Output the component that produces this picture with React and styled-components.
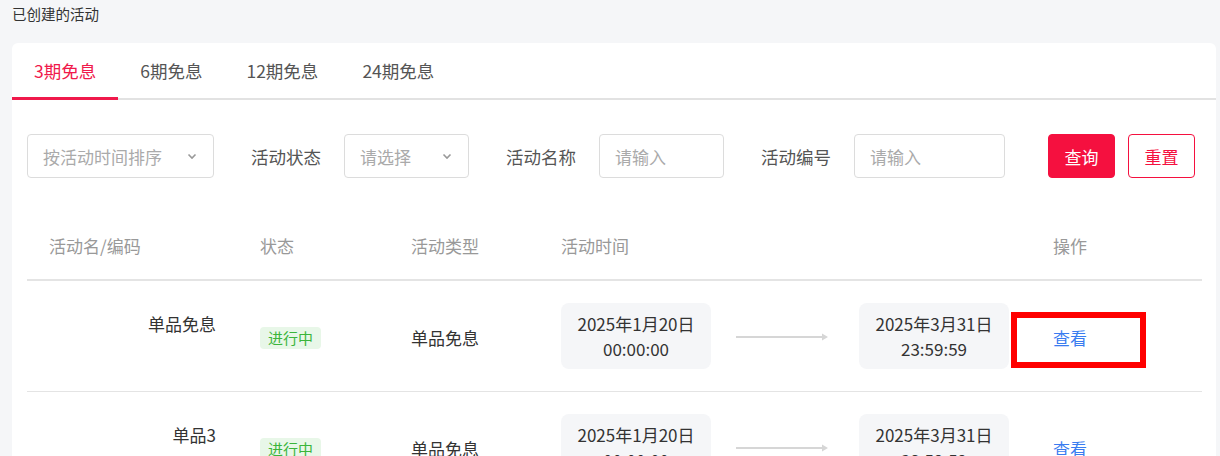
import React from "react";
import styled, { createGlobalStyle } from "styled-components";

const GlobalStyle = createGlobalStyle`
*{
  box-sizing: border-box;
  margin: 0;
  padding: 0;
}
body{
  background: #f5f6f8;
  font-family: "Noto Sans CJK SC", "Noto Sans", sans-serif;
  color: #333;
  overflow: hidden;
}
`

const Page = styled.div`
  width: 1220px;
  height: 456px;
  padding: 0 4px 0 12px;
`

const Title = styled.div`
  height: 28px;
  line-height: 28px;
  font-size: 14.5px;
  color: #333;
`

const Card = styled.div`
  margin-top: 15px;
  background: #fff;
  border-radius: 6px;
  height: 420px;
  overflow: hidden;
`

const Tabs = styled.div`
  display: flex;
  border-bottom: 2px solid #e2e2e2;
`

const Tab = styled.div`
  height: 55px;
  padding: 0 22px;
  display: flex;
  align-items: center;
  font-size: 17.5px;
  color: ${p => (p.$active ? "#f0194b" : "#555")};
  position: relative;
  &::after{
    content: "";
    display: ${p => (p.$active ? "block" : "none")};
    position: absolute;
    left: 0;
    right: 0;
    bottom: -2px;
    height: 3px;
    background: #f0194b;
  }
`

const Body = styled.div`
  padding: 34px 14px 0 15px;
`

const FilterRow = styled.div`
  display: flex;
  align-items: center;
  height: 44px;
`

const Field = styled.div`
  display: flex;
  align-items: center;
  gap: 23px;
  margin-right: 37px;
`

const Label = styled.span`
  font-size: 17.5px;
  color: #555;
`

const Box = styled.div`
  width: ${p => p.$w}px;
  height: 44px;
  border: 1px solid #dcdcdc;
  border-radius: 4px;
  padding: 0 16px 0 15px;
  display: flex;
  align-items: center;
  justify-content: space-between;
  font-size: 17px;
  color: #aaa;
`

const Buttons = styled.div`
  margin-left: 6px;
  display: flex;
  gap: 13px;
`

const Button = styled.div`
  width: 67px;
  height: 44px;
  border-radius: 4px;
  display: flex;
  align-items: center;
  justify-content: center;
  font-size: 17px;
  border: 1px solid #f5103f;
  background: ${p => (p.$primary ? "#f5103f" : "#fff")};
  color: ${p => (p.$primary ? "#fff" : "#f5103f")};
`

const Table = styled.div`
  margin-top: 33px;
`

const Row = styled.div`
  display: grid;
  grid-template-columns: 213px 151px 150px 492px 1fr;
  align-items: center;
  border-bottom: ${p => (p.$head ? "2px solid #e4e4e4" : "1px solid #e4e4e4")};
  height: ${p => (p.$head ? "70px" : "111px")};
  font-size: 17px;
  color: ${p => (p.$head ? "#999" : "#333")};
`

const Cell = styled.div`
  padding: 0 20px;
  line-height: 25px;
`

const HeadFirst = styled(Cell)`
  padding-left: 22px;
`

const NameCell = styled(Cell)`
  text-align: right;
  padding-right: 24px;
  padding-left: 22px;
`

const TypeCell = styled(Cell)`
  margin-top: 3px;
`

const Code = styled.div`
  height: 25px;
`

const Badge = styled.span`
  display: inline-block;
  height: 22px;
  line-height: 22px;
  padding: 0 8px;
  border-radius: 4px;
  background: #e8f7e8;
  color: #3bb53b;
  font-size: 15px;
  margin-top: 3px;
`

const TimeCell = styled(Cell)`
  display: flex;
  align-items: center;
`

const DateBox = styled.div`
  width: 150px;
  height: 66px;
  border-radius: 8px;
  background: #f5f6f8;
  display: flex;
  flex-direction: column;
  align-items: center;
  justify-content: center;
  font-size: 17px;
  line-height: 25px;
  color: #333;
`

const Arrow = styled.svg`
  width: 93px;
  height: 10px;
  margin: 2px 30px 0 25px;
`

const Link = styled.span`
  position: relative;
  color: #3a7cf0;
  margin-top: 3px;
  display: inline-block;
`

const Highlight = styled.span`
  position: absolute;
  left: -42px;
  top: -13px;
  width: 135px;
  height: 56px;
  border: 6px solid #ff0000;
`

const Chevron = () => (
  <svg width="10" height="7" viewBox="0 0 10 7">
    <path d="M1.5 1.5 L5 5 L8.5 1.5" fill="none" stroke="#999" strokeWidth="1.6" />
  </svg>
)

const rows = [
  { name: "单品免息", mark: true },
  { name: "单品3", mark: false },
]

export default function App() {
  return (
    <Page>
      <GlobalStyle />
      <Title>已创建的活动</Title>
      <Card>
        <Tabs>
          <Tab $active>3期免息</Tab>
          <Tab>6期免息</Tab>
          <Tab>12期免息</Tab>
          <Tab>24期免息</Tab>
        </Tabs>
        <Body>
          <FilterRow>
            <Field>
              <Box $w={187}>按活动时间排序<Chevron /></Box>
            </Field>
            <Field>
              <Label>活动状态</Label>
              <Box $w={125}>请选择<Chevron /></Box>
            </Field>
            <Field>
              <Label>活动名称</Label>
              <Box $w={125}>请输入</Box>
            </Field>
            <Field>
              <Label>活动编号</Label>
              <Box $w={151}>请输入</Box>
            </Field>
            <Buttons>
              <Button $primary>查询</Button>
              <Button>重置</Button>
            </Buttons>
          </FilterRow>
          <Table>
            <Row $head>
              <HeadFirst>活动名/编码</HeadFirst>
              <Cell>状态</Cell>
              <Cell>活动类型</Cell>
              <Cell>活动时间</Cell>
              <Cell>操作</Cell>
            </Row>
            {rows.map(r => (
              <Row key={r.name}>
                <NameCell>
                  <div>{r.name}</div>
                  <Code />
                </NameCell>
                <Cell><Badge>进行中</Badge></Cell>
                <TypeCell>单品免息</TypeCell>
                <TimeCell>
                  <DateBox>
                    <div>2025年1月20日</div>
                    <div>00:00:00</div>
                  </DateBox>
                  <Arrow viewBox="0 0 93 10">
                    <line x1="0" y1="5" x2="90" y2="5" stroke="#d6d6d6" strokeWidth="2" />
                    <path d="M86 1.5 L92 5 L86 8.5 Z" fill="#d6d6d6" />
                  </Arrow>
                  <DateBox>
                    <div>2025年3月31日</div>
                    <div>23:59:59</div>
                  </DateBox>
                </TimeCell>
                <Cell>
                  <Link>
                    查看
                    {r.mark && <Highlight />}
                  </Link>
                </Cell>
              </Row>
            ))}
          </Table>
        </Body>
      </Card>
    </Page>
  )
}
